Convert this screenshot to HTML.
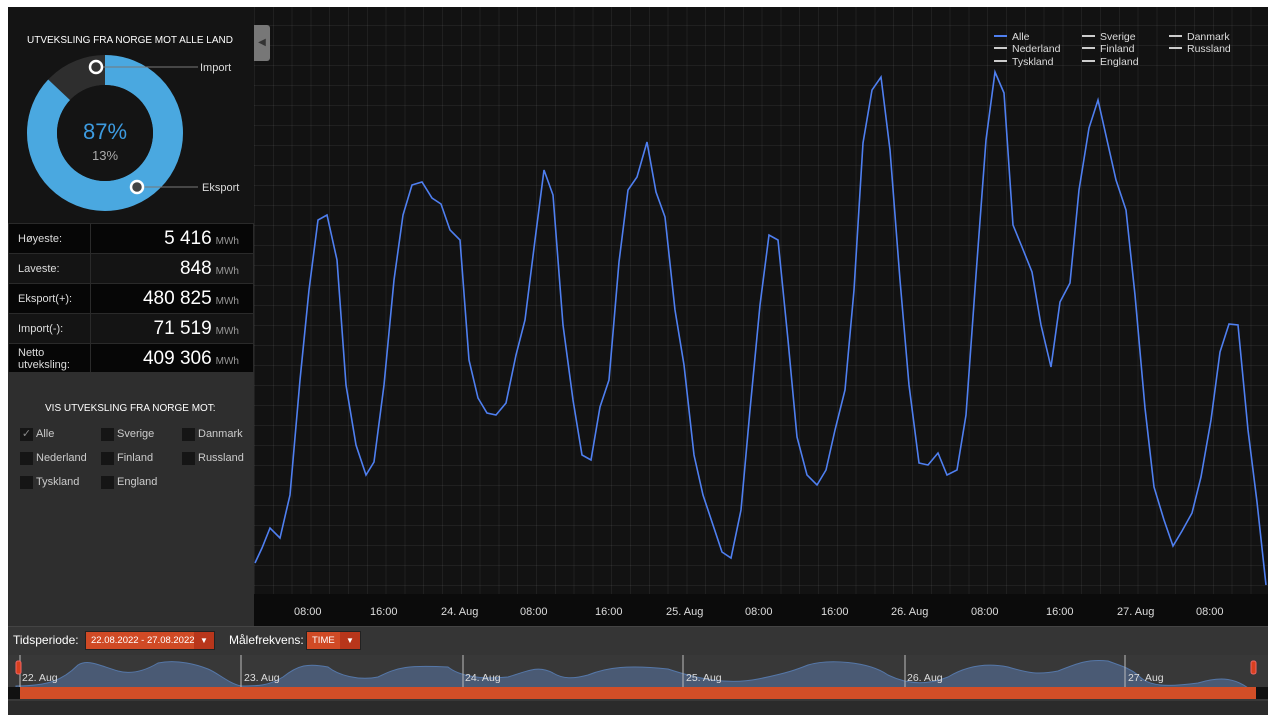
<!DOCTYPE html>
<html><head><meta charset="utf-8"><style>
*{margin:0;padding:0;box-sizing:border-box}
body{width:1280px;height:723px;background:#fff;font-family:"Liberation Sans","DejaVu Sans",sans-serif;position:relative;overflow:hidden;color:#ddd}
#app{position:absolute;left:8px;top:7px;width:1260px;height:708px;background:#2b2b2b}
#chart{position:absolute;left:246px;top:0;width:1014px;height:619px;background:#121212;
background-image:repeating-linear-gradient(90deg,rgba(255,255,255,.06) 0 1px,transparent 1px 18.8px),repeating-linear-gradient(0deg,rgba(255,255,255,.06) 0 1px,transparent 1px 20px)}
#axis{position:absolute;left:246px;top:587px;width:1014px;height:32px;background:#0b0b0b}
.ax{position:absolute;top:599px;font-size:11px;color:#ddd}
#left{position:absolute;left:0;top:0;width:246px;height:365px;background:#141414}
.t{position:absolute;font-size:10px;color:#fff}
table{position:absolute;left:0;top:216px;width:246px;border-collapse:collapse}
td{height:30px;border:1px solid #2a2a2a;font-size:11px;color:#ddd;padding-left:9px}
td.v{text-align:right;padding-right:14px;font-size:19px;color:#fff}
td.v small{font-size:10px;color:#999;margin-left:4px}
tr:nth-child(odd) td{background:#060606}tr:nth-child(even) td{background:#141414}
#cb{position:absolute;left:0;top:365px;width:246px;height:254px;background:#2e2e2e}
.c{position:absolute;font-size:11px;color:#ccc;line-height:13px}
.c i{display:inline-block;width:13px;height:13px;background:#151515;vertical-align:top;margin-right:3px;font-style:normal}
#tb{position:absolute;left:0;top:619px;width:1260px;height:29px;background:#353535;border-top:1px solid #444}
.lg{position:absolute;font-size:10.5px;color:#ddd}
.lg b{display:inline-block;width:13px;height:2px;background:#ccc;vertical-align:3px;margin-right:5px}
.dd{position:absolute;height:19px;background:#d04a25;border:1px solid #222;font-size:9.5px;color:#fff;line-height:17px;padding-left:5px}
.dd span{position:absolute;right:0;top:0;width:20px;height:17px;background:#b8361b;text-align:center;font-size:8px}
#nav{position:absolute;left:0;top:648px;width:1260px;height:46px;background:#383838}
.nl{position:absolute;top:665px;font-size:10.5px;color:#ddd}
</style></head><body>
<div id="app">
<div id="chart"></div>
<div id="axis"></div>
<div style="position:absolute;left:246px;top:18px;width:16px;height:36px;background:#777;border-radius:0 3px 3px 0;color:#333;font-size:10px;line-height:36px;text-align:center">◀</div>
<svg style="position:absolute;left:0;top:0" width="1260" height="620">
<polyline fill="none" stroke="#4f7ff0" stroke-width="1.6" transform="translate(-8,-7)" points="255,563 262,548 270,528 280,538 290,495 300,380 309,290 318,220 327,215 337,260 346,385 356,445 366,475 374,462 384,385 394,280 403,215 412,185 422,182 432,198 441,204 450,230 460,240 469,360 478,398 487,413 496,415 506,403 516,355 525,320 535,240 544,170 553,195 563,325 573,400 582,455 591,460 600,407 609,380 619,262 628,190 637,177 647,142 656,192 665,217 675,310 684,365 694,455 703,495 713,525 722,552 731,558 741,510 750,410 760,305 769,235 778,240 788,340 797,437 807,475 817,485 826,470 835,430 845,390 854,290 863,143 872,90 881,77 890,150 900,280 909,385 919,463 928,465 938,453 947,475 957,470 966,415 976,275 986,140 995,72 1004,93 1013,225 1022,247 1032,272 1041,325 1051,367 1060,302 1070,283 1079,190 1089,128 1098,100 1107,140 1116,180 1126,210 1135,295 1145,408 1154,487 1164,520 1173,546 1182,531 1192,513 1201,477 1211,420 1220,352 1229,324 1238,325 1248,430 1257,502 1266,585"/>
</svg>
<div class="ax" style="left:286px">08:00</div><div class="ax" style="left:362px">16:00</div><div class="ax" style="left:433px">24. Aug</div>
<div class="ax" style="left:512px">08:00</div><div class="ax" style="left:587px">16:00</div><div class="ax" style="left:658px">25. Aug</div>
<div class="ax" style="left:737px">08:00</div><div class="ax" style="left:813px">16:00</div><div class="ax" style="left:883px">26. Aug</div>
<div class="ax" style="left:963px">08:00</div><div class="ax" style="left:1038px">16:00</div><div class="ax" style="left:1109px">27. Aug</div>
<div class="ax" style="left:1188px">08:00</div>
<div class="lg" style="left:986px;top:24px"><b style="background:#4f7ff0"></b>Alle</div>
<div class="lg" style="left:986px;top:36px"><b></b>Nederland</div>
<div class="lg" style="left:986px;top:49px"><b></b>Tyskland</div>
<div class="lg" style="left:1074px;top:24px"><b></b>Sverige</div>
<div class="lg" style="left:1074px;top:36px"><b></b>Finland</div>
<div class="lg" style="left:1074px;top:49px"><b></b>England</div>
<div class="lg" style="left:1161px;top:24px"><b></b>Danmark</div>
<div class="lg" style="left:1161px;top:36px"><b></b>Russland</div>

<div id="left">
<div class="t" style="left:19px;top:28px">UTVEKSLING FRA NORGE MOT ALLE LAND</div>
<svg style="position:absolute;left:0;top:0" width="246" height="216">
<circle cx="97" cy="126" r="63" fill="none" stroke="#2e2e2e" stroke-width="30"/>
<circle cx="97" cy="126" r="63" fill="none" stroke="#4aa8e0" stroke-width="30" stroke-dasharray="344.3 400" transform="rotate(-90 97 126)"/>
<circle cx="97" cy="126" r="48" fill="#141414"/>
<line x1="92" y1="60" x2="190" y2="60" stroke="#777"/>
<line x1="133" y1="180" x2="190" y2="180" stroke="#777"/>
<circle cx="88" cy="60" r="6" fill="#333" stroke="#fff" stroke-width="2.5"/>
<circle cx="129" cy="180" r="6" fill="#444" stroke="#fff" stroke-width="2.5"/>
<text x="97" y="132" text-anchor="middle" font-size="22" fill="#3d9be0" font-family="Liberation Sans">87%</text>
<text x="97" y="153" text-anchor="middle" font-size="13" fill="#aaa" font-family="Liberation Sans">13%</text>
<text x="192" y="64" font-size="11" fill="#ddd" font-family="Liberation Sans">Import</text>
<text x="194" y="184" font-size="11" fill="#ddd" font-family="Liberation Sans">Eksport</text>
</svg>
<table>
<tr><td style="width:82px">Høyeste:</td><td class="v">5 416<small>MWh</small></td></tr>
<tr><td>Laveste:</td><td class="v">848<small>MWh</small></td></tr>
<tr><td>Eksport(+):</td><td class="v">480 825<small>MWh</small></td></tr>
<tr><td>Import(-):</td><td class="v">71 519<small>MWh</small></td></tr>
<tr><td style="line-height:12px">Netto<br>utveksling:</td><td class="v">409 306<small>MWh</small></td></tr>
</table>
</div>
<div id="cb">
<div class="t" style="left:37px;top:31px">VIS UTVEKSLING FRA NORGE MOT:</div>
<div class="c" style="left:12px;top:56px"><i style="color:#888;font-size:11px;text-align:center">✓</i>Alle</div>
<div class="c" style="left:93px;top:56px"><i></i>Sverige</div>
<div class="c" style="left:174px;top:56px"><i></i>Danmark</div>
<div class="c" style="left:12px;top:80px"><i></i>Nederland</div>
<div class="c" style="left:93px;top:80px"><i></i>Finland</div>
<div class="c" style="left:174px;top:80px"><i></i>Russland</div>
<div class="c" style="left:12px;top:104px"><i></i>Tyskland</div>
<div class="c" style="left:93px;top:104px"><i></i>England</div>
</div>
<div id="tb">
<div style="position:absolute;left:5px;top:6px;font-size:12px;color:#fff">Tidsperiode:</div>
<div class="dd" style="left:77px;top:4px;width:130px">22.08.2022 - 27.08.2022<span>▼</span></div>
<div style="position:absolute;left:221px;top:6px;font-size:12px;color:#fff">Målefrekvens:</div>
<div class="dd" style="left:298px;top:4px;width:55px">TIME<span>▼</span></div>
</div>
<div id="nav">
<svg style="position:absolute;left:0;top:0" width="1260" height="46">
<path d="M8,31 C40,31 55,25 70,10 C80,4 90,10 110,16 C125,20 140,14 150,8 C170,4 190,10 200,14 C210,18 220,28 233,31 C250,31 260,31 275,22 C290,10 300,8 320,12 C330,20 350,26 370,22 C390,12 400,10 440,12 C450,20 470,25 500,22 C520,16 530,10 545,18 C555,24 565,24 580,20 C600,12 620,10 660,14 C690,24 720,30 750,24 C780,18 790,14 800,10 C820,4 860,6 880,20 C900,30 920,30 940,22 C960,10 980,8 1000,12 C1020,18 1030,20 1050,16 C1070,8 1080,4 1100,6 C1110,10 1120,12 1130,20 C1140,32 1160,32 1190,28 C1210,22 1230,20 1250,42 L1250,33 L8,33 Z" fill="#4a5a74" stroke="#5577a8" stroke-width="1"/>
<g stroke="#bbb" stroke-width="1"><line x1="12" y1="0" x2="12" y2="33"/><line x1="233" y1="0" x2="233" y2="33"/><line x1="455" y1="0" x2="455" y2="33"/><line x1="675" y1="0" x2="675" y2="33"/><line x1="897" y1="0" x2="897" y2="33"/><line x1="1117" y1="0" x2="1117" y2="33"/></g>
<rect x="8" y="6" width="5" height="13" rx="2" fill="#d8401f" stroke="#e66"/>
<rect x="1243" y="6" width="5" height="13" rx="2" fill="#d8401f" stroke="#e66"/>
<rect x="0" y="32" width="12" height="12" fill="#111"/>
<rect x="1248" y="32" width="12" height="12" fill="#111"/>
<rect x="12" y="32" width="1236" height="12" fill="#d24e27"/>
</svg>
</div>
<div class="nl" style="left:14px">22. Aug</div><div class="nl" style="left:236px">23. Aug</div><div class="nl" style="left:457px">24. Aug</div>
<div class="nl" style="left:678px">25. Aug</div><div class="nl" style="left:899px">26. Aug</div><div class="nl" style="left:1120px">27. Aug</div>
</div>
</body></html>
